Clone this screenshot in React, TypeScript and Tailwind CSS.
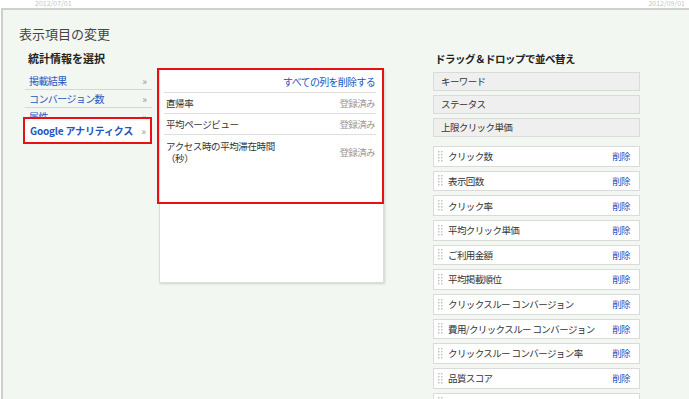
import React from 'react';

const jp = { fontFamily: '"Noto Sans CJK JP", "Liberation Sans", sans-serif' };

const statsCategories = ['掲載結果', 'コンバージョン数', '属性'];

const addedColumns = [
  { label: '直帰率', h: 'h-[21px]' },
  { label: '平均ページビュー', h: 'h-[21px]' },
  { label: 'アクセス時の平均滞在時間\n（秒）', h: 'h-[34px]' },
];

const fixedColumns = ['キーワード', 'ステータス', '上限クリック単価'];

const sortableColumns = [
  'クリック数',
  '表示回数',
  'クリック率',
  '平均クリック単価',
  'ご利用金額',
  '平均掲載順位',
  'クリックスルー コンバージョン',
  '費用/クリックスルー コンバージョン',
  'クリックスルー コンバージョン率',
  '品質スコア',
  'ビュースルー コンバージョン',
];

function DragHandle() {
  return (
    <svg width="5" height="11" viewBox="0 0 5 11" className="shrink-0">
      {[0, 3, 6, 9].map((y) => (
        <g key={y} fill="#c4c4c4">
          <rect x="0" y={y} width="1.5" height="1.5" />
          <rect x="3" y={y} width="1.5" height="1.5" />
        </g>
      ))}
    </svg>
  );
}

export default function App() {
  return (
    <div style={jp} className="w-[689px] h-[399px] overflow-hidden bg-white flex flex-col text-[#333]">
      {/* date strip */}
      <div className="h-[8px] shrink-0 flex justify-between pl-[35px] pr-[4px] text-[7px] leading-[7px] text-[#c4c4c4]">
        <span>2012/07/01</span>
        <span>2012/09/01</span>
      </div>

      <div className="flex-1 bg-[#f3f7f2] border-t-2 border-l-2 border-[#cdd0cc] ml-[1px]">
        <div className="pl-[16px] pt-[15px] text-[13px] leading-[18px] text-[#444]">表示項目の変更</div>

        <div className="flex">
          {/* left: categories */}
          <div className="ml-[22px] w-[127px] shrink-0">
            <div className="mt-[8px] mb-[7px] pl-[3px] text-[11px] leading-[14px] font-bold text-[#222]">
              統計情報を選択
            </div>
            {statsCategories.map((c) => (
              <div
                key={c}
                className="h-[18px] flex items-center justify-between pl-[4px] pr-[5px] border-b border-[#d6d8d5] text-[10px] text-[#2356c4] tracking-[-0.6px]"
              >
                <span>{c}</span>
                <span className="text-[#999] text-[10px] tracking-normal">»</span>
              </div>
            ))}
            <div className="relative -mt-[9px] -ml-[2px] w-[129px] h-[27px] bg-white border-2 border-solid border-[#e81010] flex items-center justify-between pl-[5px] pr-[4px]">
              <span className="text-[10px] font-bold text-[#2356c4] tracking-[-0.2px]">Google アナリティクス</span>
              <span className="text-[#999] text-[10px]">»</span>
            </div>
          </div>

          {/* middle: selected columns */}
          <div className="relative ml-[7px] mt-[26px] w-[225px] h-[214px] shrink-0 bg-white border border-[#dcdcdc] shadow-[1px_1px_2px_rgba(0,0,0,0.15)] pl-[4px] pr-[7px]">
            <div className="h-[22px] flex items-center justify-end pr-[1px] text-[10px] text-[#2356c4] tracking-[-0.7px]">
              すべての列を削除する
            </div>
            {addedColumns.map((c) => (
              <div
                key={c.label}
                className={`${c.h} flex items-center justify-between border-t border-[#dedede] pl-[2px] pr-[1px] text-[9.5px] leading-[12px] last:border-b`}
              >
                <span className="whitespace-pre-line tracking-[-0.4px]">{c.label}</span>
                <span className="text-[#999] tracking-[-0.6px]">登録済み</span>
              </div>
            ))}
            <div className="absolute -left-[3px] -top-[2px] w-[227px] h-[136px] border-2 border-solid border-[#e81010] pointer-events-none" />
          </div>

          {/* right: sort order */}
          <div className="ml-[49px] w-[207px] shrink-0">
            <div className="mt-[9px] mb-[6px] pl-[2px] text-[10.5px] leading-[14px] font-bold text-[#222] tracking-[-0.5px]">
              ドラッグ＆ドロップで並べ替え
            </div>
            <div className="flex flex-col gap-[4px]">
              {fixedColumns.map((c) => (
                <div
                  key={c}
                  className="h-[19px] flex items-center pl-[7px] bg-[#efefef] border border-[#dadada] text-[9.5px] tracking-[-0.6px]"
                >
                  {c}
                </div>
              ))}
            </div>
            <div className="mt-[9px] flex flex-col gap-[4px]">
              {sortableColumns.map((c) => (
                <div
                  key={c}
                  className="h-[20.67px] shrink-0 flex items-center justify-between pl-[4px] pr-[9px] bg-white border border-[#dadada] text-[9.5px]"
                >
                  <div className="flex items-center gap-[5px]">
                    <DragHandle />
                    <span className="tracking-[-0.6px]">{c}</span>
                  </div>
                  <span className="text-[#2356c4] tracking-[-0.6px]">削除</span>
                </div>
              ))}
            </div>
          </div>
        </div>
      </div>
    </div>
  );
}
